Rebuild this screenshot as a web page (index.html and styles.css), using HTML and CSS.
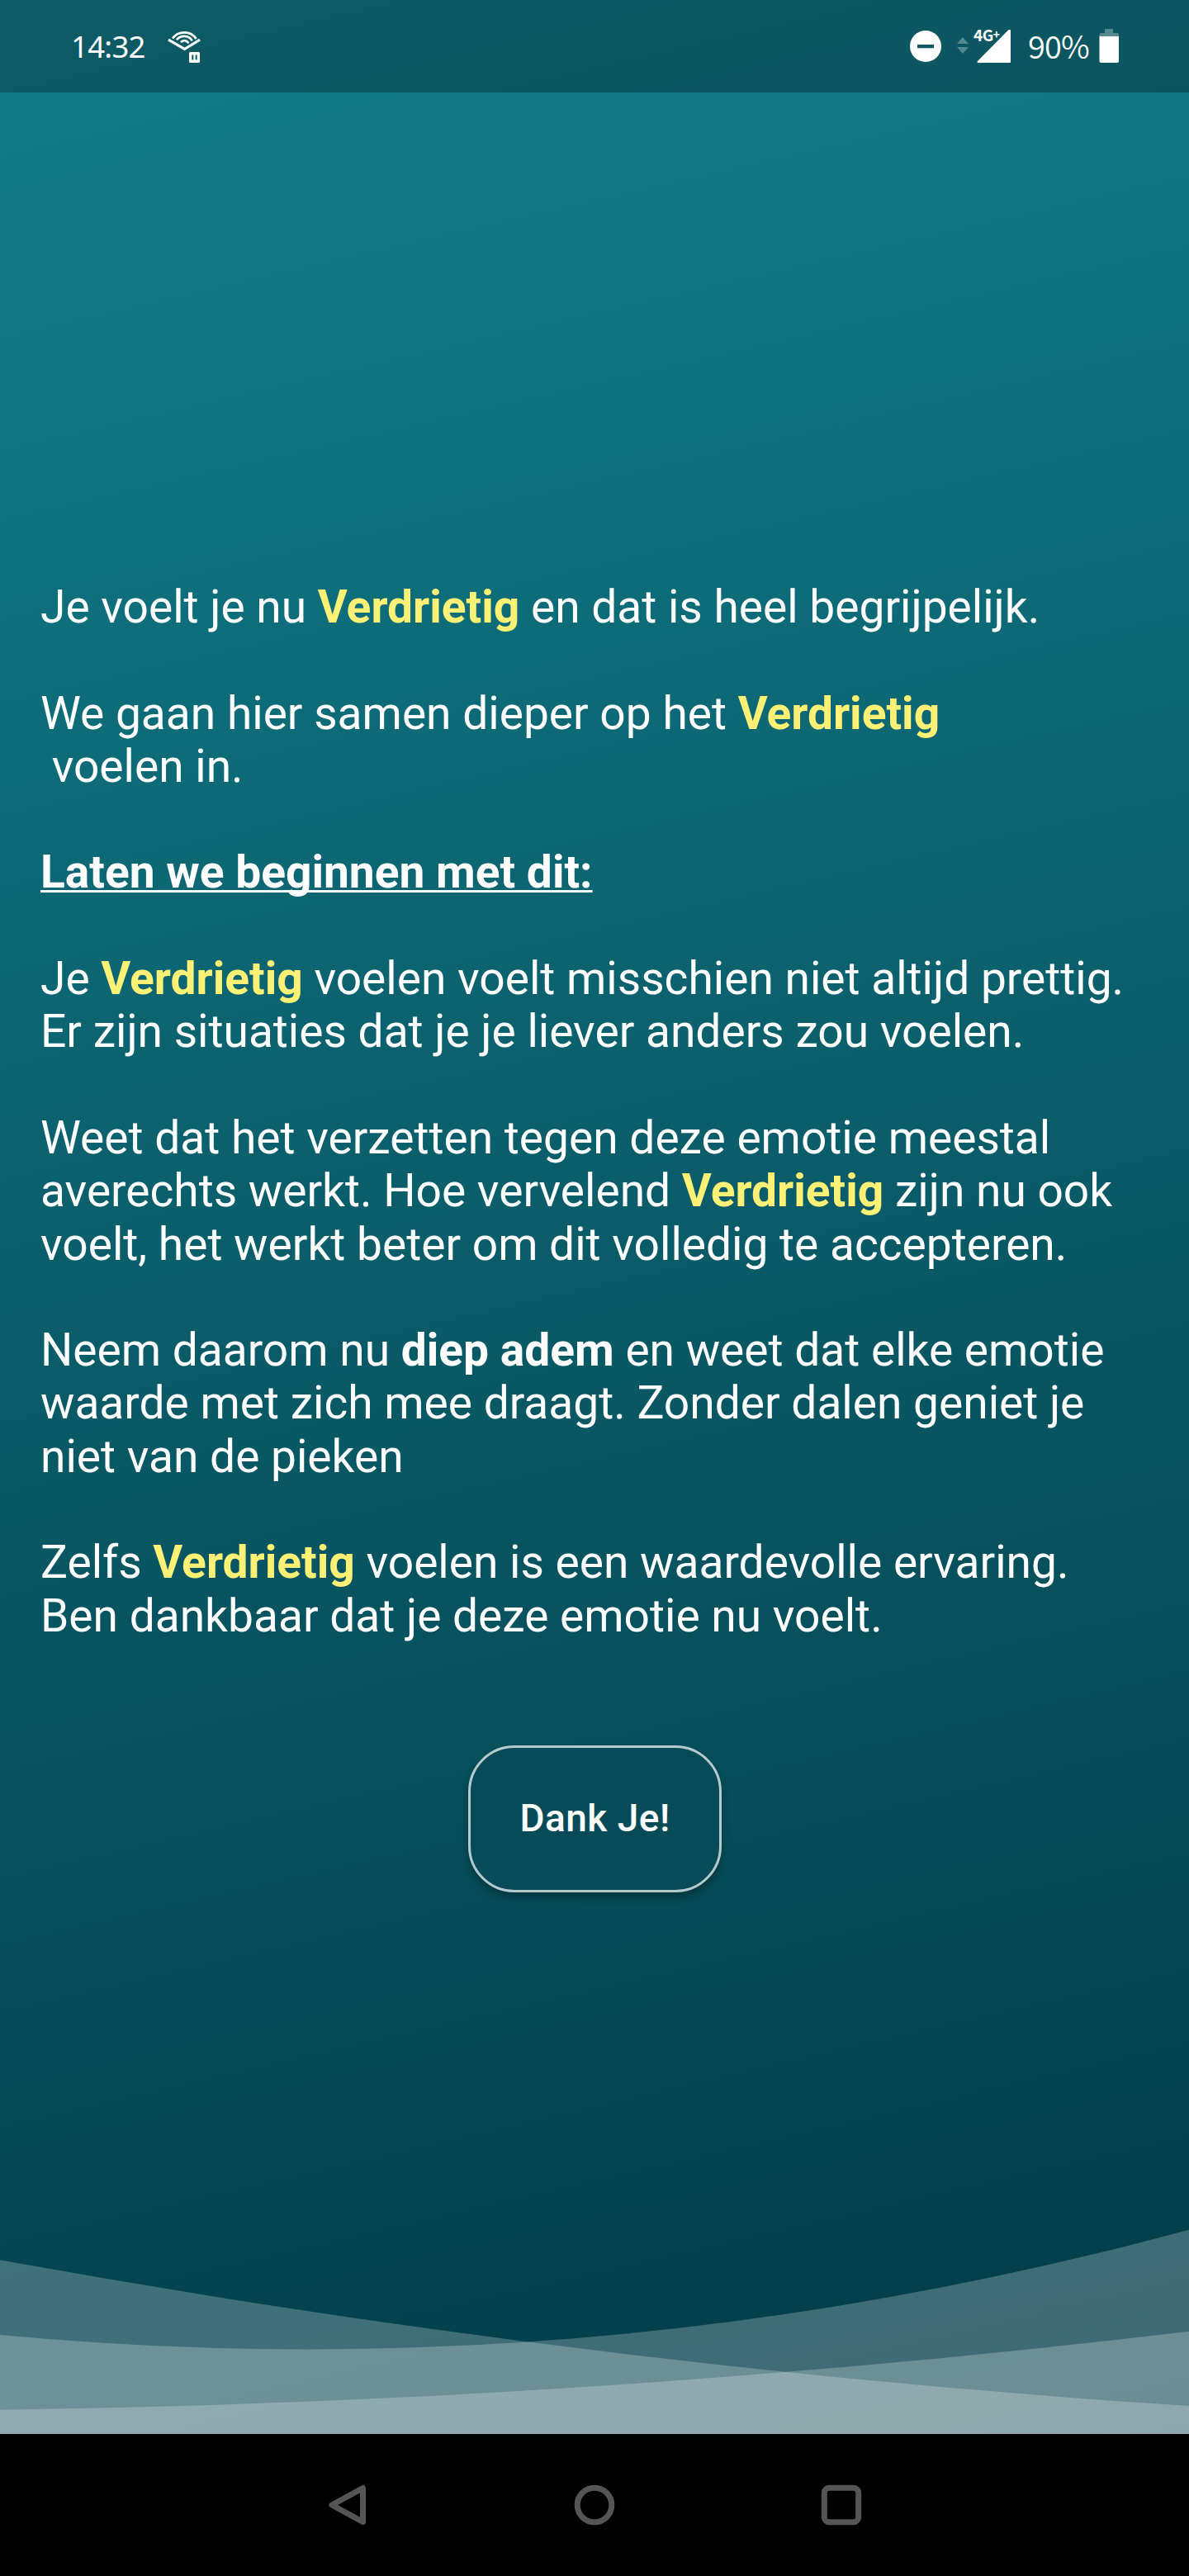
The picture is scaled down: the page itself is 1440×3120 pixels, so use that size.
FILE: index.html
```html
<!DOCTYPE html>
<html lang="nl">
<head>
<meta charset="utf-8">
<title>Verdrietig</title>
<link rel="stylesheet" href="styles.css">
</head>
<body>
<div class="phone">
  <div class="screen">
    <header class="status-bar">
      <span class="clock">14:32</span>
      <svg class="icon-audio" width="40" height="40" viewBox="0 0 40 40" fill="none" stroke="#fff">
        <path d="M1 10.200L20.500 21.500L39 10.200" stroke-width="3.200"/>
        <path d="M6 8.500C13 -1 28 -1 34.500 9" stroke-width="2.800"/>
        <path d="M11 10.300C15 4.500 25.500 4 29.800 11.300" stroke-width="2.600"/>
        <path d="M16 13.200C18.500 10.300 23 10.300 25.400 14.400" stroke-width="2.600"/>
        <rect x="26" y="25" width="13" height="13" rx="1.500" fill="#fff" stroke="none"/>
        <path d="M30.300 28.500V34.500M34.700 28.500V34.500" stroke="#105a65" stroke-width="2"/>
      </svg>
      <span class="spacer"></span>
      <svg class="icon-dnd" width="38" height="38" viewBox="0 0 38 38">
        <circle cx="19" cy="19" r="19" fill="#fff"/>
        <rect x="9" y="17" width="20" height="4.300" fill="#0e5863"/>
      </svg>
      <svg class="icon-data" width="14" height="20" viewBox="0 0 14 20" fill="#fff" fill-opacity=".3">
        <path d="M7 0L14 8H0zM0 12H14L7 20z"/>
      </svg>
      <div class="signal">
        <svg width="46" height="42" viewBox="0 0 46 42">
          <path d="M45 2V40H6.500L44 2Z" fill="#fff" stroke="#fff" stroke-width="2" stroke-linejoin="round"/>
        </svg>
        <span class="signal-label">4G<span class="signal-plus">+</span></span>
      </div>
      <span class="percent">90%</span>
      <svg class="icon-battery" width="24" height="42" viewBox="0 0 24 42">
        <path d="M7 0H17V5H22.500Q24 5 24 7V9H0.500V7Q0.500 5 2.500 5H7Z" fill="#fff" fill-opacity=".3"/>
        <path d="M.5 9H24V39Q24 41 22 41H2.500Q.5 41 .5 39Z" fill="#fff"/>
      </svg>
    </header>

    <main class="content">
      <p>Je voelt je nu <b class="emotion">Verdrietig</b> en dat is heel begrijpelijk.</p>
      <p>We gaan hier samen dieper op het <b class="emotion">Verdrietig</b><br>&nbsp;voelen in.</p>
      <p><b class="lead">Laten we beginnen met dit:</b></p>
      <p>Je <b class="emotion">Verdrietig</b> voelen voelt misschien niet altijd prettig.<br>Er zijn situaties dat je je liever anders zou voelen.</p>
      <p>Weet dat het verzetten tegen deze emotie meestal<br>averechts werkt. Hoe vervelend <b class="emotion">Verdrietig</b> zijn nu ook<br>voelt, het werkt beter om dit volledig te accepteren.</p>
      <p>Neem daarom nu <b>diep adem</b> en weet dat elke emotie<br>waarde met zich mee draagt. Zonder dalen geniet je<br>niet van de pieken</p>
      <p>Zelfs <b class="emotion">Verdrietig</b> voelen is een waardevolle ervaring.<br>Ben dankbaar dat je deze emotie nu voelt.</p>
      <button class="thanks" type="button">Dank Je!</button>
    </main>

    <svg class="waves" width="1440" height="248" viewBox="0 2700 1440 248" fill="#fff" fill-opacity=".24">
      <path d="M0 2737.300Q720 2867.700 1440 2914V2948H0Z"/>
      <path d="M0 2828Q720 2895.700 1440 2700.700V2948H0Z"/>
      <path d="M0 2918.700Q720 2909.400 1440 2823.700V2948H0Z"/>
    </svg>
  </div>

  <nav class="nav-bar">
    <svg width="50" height="50" viewBox="0 0 50 50" fill="none" stroke="#555" stroke-width="7" stroke-linejoin="round">
      <path d="M43.500 4.500V45.500L6 25Z"/>
    </svg>
    <svg width="50" height="50" viewBox="0 0 50 50" fill="none" stroke="#555" stroke-width="7">
      <circle cx="25" cy="25" r="20.800"/>
    </svg>
    <svg width="50" height="50" viewBox="0 0 50 50" fill="none" stroke="#555" stroke-width="7">
      <rect x="4.300" y="4.300" width="41.400" height="41.400" rx="6"/>
    </svg>
  </nav>
</div>
</body>
</html>
```
FILE: styles.css
```css
body {
  margin: 0;
  background: #000;
}

.phone {
  display: flex;
  flex-direction: column;
  width: 1440px;
  height: 3120px;
  overflow: hidden;
  font-family: Roboto, sans-serif;
  color: #fff;
}

.screen {
  position: relative;
  display: flex;
  flex-direction: column;
  height: 2948px;
  background: linear-gradient(167deg, #127e8c 0%, #0b606c 45%, #054b57 75%, #023b46 100%);
}

.status-bar {
  display: flex;
  align-items: center;
  box-sizing: border-box;
  height: 112px;
  padding: 0 85px 0 86px;
  background: rgba(0, 0, 0, 0.27);
}

.clock {
  width: 92px;
  font: 400 36.500px/48px "Noto Sans", sans-serif;
  letter-spacing: -0.7px;
  white-space: nowrap;
}

.icon-audio {
  margin: 3px 0 0 25px;
}

.spacer {
  flex: 1;
}

.icon-data {
  margin: 0 5px 2px 19px;
}

.signal {
  position: relative;
  width: 46px;
  height: 42px;
}

.signal-label {
  position: absolute;
  left: 1px;
  top: -5px;
  font: 700 19px/24px "Noto Sans CJK SC", sans-serif;
  letter-spacing: -0.5px;
  white-space: nowrap;
}

.signal-plus {
  position: relative;
  top: -3px;
  font-size: 14px;
}

.percent {
  width: 86px;
  margin: 0 0 3px 21px;
  font: 350 38px/48px "Noto Sans CJK SC", sans-serif;
  letter-spacing: -0.8px;
  white-space: nowrap;
}

.content {
  display: flex;
  flex-direction: column;
  gap: 64.300px;
  padding: 591px 48px 0 49px;
  font-size: 55.100px;
  line-height: 64.300px;
}

.content p {
  margin: 0;
  white-space: nowrap;
}

.content b {
  font-weight: 700;
}

.content .emotion {
  color: #fff176;
}

.content .lead {
  text-decoration: underline;
  text-decoration-thickness: 3px;
  text-decoration-skip-ink: none;
  text-underline-offset: 3px;
}

.thanks {
  align-self: center;
  box-sizing: border-box;
  width: 307px;
  height: 178px;
  margin-top: 61px;
  padding: 0 0 2px;
  border: 3px solid #b3cacf;
  border-radius: 56px;
  background: #064b57;
  box-shadow: 0 7px 10px rgba(0, 0, 0, 0.25);
  color: #fff;
  font: 500 46px/54px Roboto, sans-serif;
  letter-spacing: 0.5px;
}

.waves {
  position: absolute;
  left: 0;
  bottom: 0;
}

.nav-bar {
  display: flex;
  align-items: center;
  justify-content: center;
  gap: 249px;
  height: 172px;
  background: #000;
}
```
